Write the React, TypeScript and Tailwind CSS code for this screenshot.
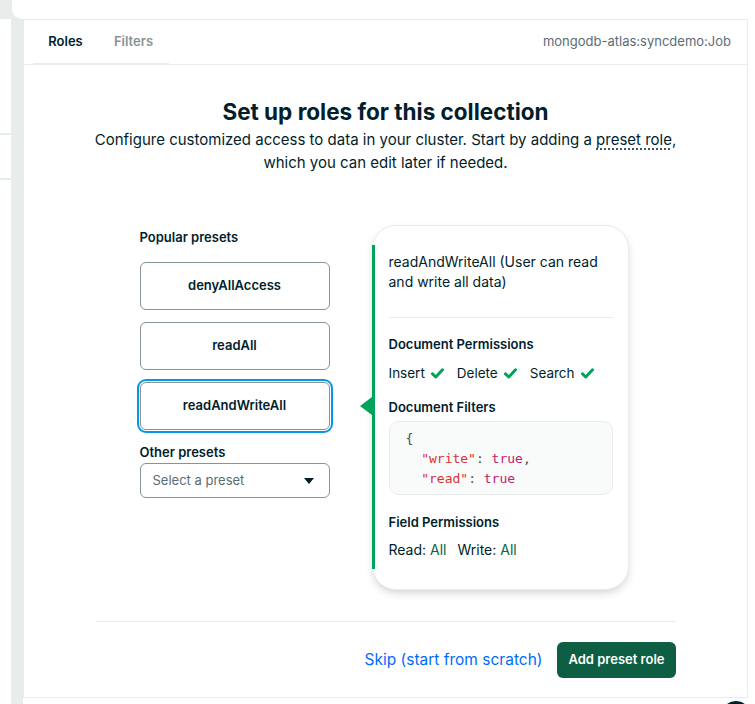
import { useState } from "react"

const presets = ["denyAllAccess", "readAll", "readAndWriteAll"]

function Tick() {
  return (
    <svg width="13" height="11" viewBox="0 0 13 11" className="inline-block">
      <path d="M1.5 5.8 L4.8 9 L11.5 1.8" fill="none" stroke="#00a35c" strokeWidth="3" strokeLinecap="round" strokeLinejoin="round" />
    </svg>
  )
}

export default function App() {
  const [selected, setSelected] = useState("readAndWriteAll")

  return (
    <div className="relative flex h-[704px] w-[755px] flex-col overflow-hidden bg-white text-[#001e2b] font-['Inter',sans-serif]">
      {/* top bar */}
      <div className="h-[19px] shrink-0 bg-[#e8edeb] pl-[12px]">
        <div className="h-full rounded-bl-[10px] bg-white" />
      </div>

      <div className="flex flex-1">
        {/* left side list */}
        <div className="w-[11px] shrink-0 bg-white">
          <div className="mt-[114px] h-[2px] bg-[#e8edeb]" />
          <div className="mt-[43px] h-[2px] bg-[#e8edeb]" />
        </div>
        <div className="w-[12px] shrink-0 bg-[#e8edeb]" />

        {/* main panel */}
        <div className="mb-[6px] mr-[7px] flex flex-1 flex-col border border-[#e8edeb] bg-white">
          {/* tabs */}
          <div className="flex h-[45px] shrink-0 items-end justify-between border-b border-[#e8edeb] pl-[9px] pr-[16px]">
            <div className="flex h-full border-b-2 border-[#e8edeb] -mb-[1px]">
              <div className="flex w-[65px] items-center justify-center text-[13px] font-semibold text-[#001e2b]">Roles</div>
              <div className="flex w-[71px] items-center justify-center text-[13px] font-semibold text-[#889397]">Filters</div>
            </div>
            <div className="flex h-full items-center text-[13px] text-[#5c6c75]">mongodb-atlas:syncdemo:Job</div>
          </div>

          {/* body */}
          <div className="flex flex-1 flex-col items-center">
            <h1 className="mt-[32px] text-[22.5px] font-bold leading-[30px]">Set up roles for this collection</h1>
            <p className="mt-[1px] text-center text-[15px] leading-[23px] text-[#001e2b]">
              Configure customized access to data in your cluster. Start by adding a{" "}
              <span className="underline decoration-dotted decoration-[#001e2b] underline-offset-4">preset role</span>,
              <br />
              which you can edit later if needed.
            </p>

            <div className="mt-[51px] flex w-[492px] items-start pr-[4px]">
              {/* presets column */}
              <div className="mt-[4px] flex w-[190px] shrink-0 flex-col">
                <div className="text-[13px] font-semibold leading-4">Popular presets</div>
                <div className="mt-[17px] flex flex-col gap-[12px]">
                  {presets.map((p) => (
                    <button
                      key={p}
                      onClick={() => setSelected(p)}
                      className={`h-[48px] rounded-[6px] border border-[#889397] bg-white text-[13px] font-semibold text-[#001e2b] ${
                        selected === p ? "shadow-[0_0_0_1px_#ffffff,0_0_0_3px_#0498ec]" : ""
                      }`}
                    >
                      {p}
                    </button>
                  ))}
                </div>
                <div className="mt-[14px] text-[13px] font-semibold leading-4">Other presets</div>
                <div className="mt-[3px] flex h-[35px] items-center justify-between rounded-[6px] border border-[#889397] pl-[12px] pr-[15px] text-[13px] text-[#5c6c75]">
                  <span>Select a preset</span>
                  <svg width="10" height="6" viewBox="0 0 10 6">
                    <path d="M0 0 L10 0 L5 6 Z" fill="#001e2b" />
                  </svg>
                </div>
              </div>

              <div className="w-[42px] shrink-0" />

              {/* role details card */}
              <div className="relative w-[257px] shrink-0 rounded-[24px] border border-[#e8edeb] bg-white pb-[29px] pl-4 pr-[15px] pt-[26px] shadow-[0_4px_10px_-2px_rgba(0,30,43,0.22)]">
                <div className="absolute left-[-1px] top-[19px] bottom-[20px] w-[3px] bg-[#00a35c]" />
                <div className="absolute left-[-13px] top-[171px] h-0 w-0 border-y-[9px] border-r-[12px] border-y-transparent border-r-[#00a35c]" />

                <div className="text-[14px] leading-5">readAndWriteAll (User can read and write all data)</div>
                <div className="mt-[25px] h-px bg-[#e8edeb]" />

                <div className="mt-[18px] text-[13px] font-semibold leading-4">Document Permissions</div>
                <div className="mt-[11px] flex items-center gap-[13px] text-[13.5px] leading-5">
                  <span className="flex items-center gap-[6px]">Insert <Tick /></span>
                  <span className="flex items-center gap-[6px]">Delete <Tick /></span>
                  <span className="flex items-center gap-[6px]">Search <Tick /></span>
                </div>

                <div className="mt-[16px] text-[13px] font-semibold leading-4">Document Filters</div>
                <div className="mt-[6px] rounded-[10px] border border-[#e8edeb] bg-[#f9fbfa] pb-[5px] pl-[16px] pt-[7px] font-['DejaVu_Sans_Mono',monospace] text-[13px] leading-5 text-[#3d4f58]">
                  <div>{"{"}</div>
                  <div className="whitespace-pre">
                    {"  "}
                    <span className="text-[#db3030]">"write"</span>: <span className="text-[#c0226b]">true</span>,
                  </div>
                  <div className="whitespace-pre">
                    {"  "}
                    <span className="text-[#db3030]">"read"</span>: <span className="text-[#c0226b]">true</span>
                  </div>
                </div>

                <div className="mt-[19px] text-[13px] font-semibold leading-4">Field Permissions</div>
                <div className="mt-[10px] flex gap-[11px] text-[14px] leading-5">
                  <span>
                    Read: <span className="text-[#00684a]">All</span>
                  </span>
                  <span>
                    Write: <span className="text-[#00684a]">All</span>
                  </span>
                </div>
              </div>
            </div>

            {/* footer */}
            <div className="mt-[31px] w-[580px] border-t border-[#e8edeb]">
              <div className="mt-[20px] flex items-center justify-end gap-[15px]">
                <a href="#" className="text-[15.5px] text-[#016bf8]">Skip (start from scratch)</a>
                <button className="h-[36px] rounded-[6px] bg-[#0d5e43] px-[11px] text-[13px] font-semibold text-white">
                  Add preset role
                </button>
              </div>
            </div>
          </div>
        </div>
      </div>

      <div className="absolute left-[721px] top-[701px] h-[30px] w-[30px] rounded-full bg-[#001e2b]" />
    </div>
  )
}
